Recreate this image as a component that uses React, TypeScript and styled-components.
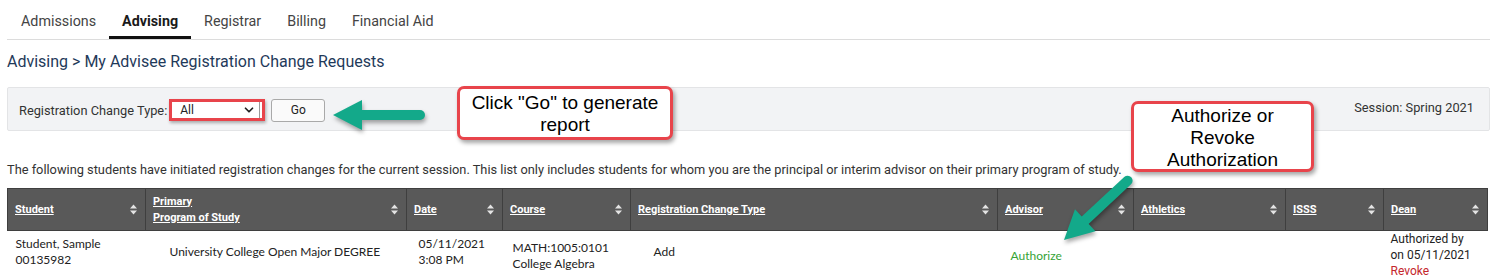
import React from 'react';
import styled, { createGlobalStyle } from 'styled-components';
import { ChevronDown } from 'lucide-react';

const GlobalStyle = createGlobalStyle`
	body {
		margin: 0;
		background: #fff;
		font-family: Roboto, "Liberation Sans", sans-serif;
		color: #333;
	}
`;

const Page = styled.div`
	position: relative;
	width: 1483px;
	padding-left: 7px;
	height: 279px;
	overflow: hidden;
`;

const TabBar = styled.nav`
	display: flex;
	height: 39px;
	padding-left: 1px;
	border-bottom: 1px solid #dcdcdc;
`;

const Tab = styled.a<{ $active?: boolean }>`
	display: flex;
	align-items: center;
	padding: 3px 13px 0;
	font-size: 14.3px;
	text-decoration: none;
	color: ${p => (p.$active ? '#1a1a1a' : '#444')};
	font-weight: ${p => (p.$active ? 700 : 400)};
	box-shadow: ${p => (p.$active ? 'inset 0 -3px 0 #111' : 'none')};
`;

const Title = styled.h1`
	margin: 12px 0 0;
	font-size: 16px;
	font-weight: 400;
	line-height: 20px;
	color: #1f3a5a;
`;

const FilterBar = styled.div`
	margin-top: 15px;
	display: flex;
	align-items: center;
	padding: 2px 15px 0 11px;
	box-sizing: border-box;
	height: 44px;
	background: #f2f3f5;
	border: 1px solid #e3e4e6;
	border-radius: 2px;
	font-size: 12.8px;
	color: #333;
`;

const Label = styled.label`
	margin-right: 2px;
`;

const SelectFrame = styled.div`
	position: relative;
	display: flex;
	width: 96px;
	height: 22px;
	box-sizing: border-box;
	border: 3px solid #e8444b;
	box-shadow: 1px 2px 3px rgba(0, 0, 0, 0.3);
	background: #fff;
`;

const Select = styled.select`
	appearance: none;
	width: 88px;
	height: 16px;
	border: 0;
	border-right: 1px solid #9a9a9a;
	padding: 0 0 0 8px;
	background: #fff;
	font-family: Roboto, "Liberation Sans", sans-serif;
	font-size: 12px;
	color: #222;
	outline: none;
`;

const Chevron = styled(ChevronDown)`
	position: absolute;
	right: 6px;
	top: 1px;
	pointer-events: none;
`;

const GoButton = styled.button`
	margin-left: 6px;
	width: 54px;
	height: 23px;
	border: 1px solid #a9a9a9;
	border-radius: 3px;
	background: #fafafa;
	font-family: Roboto, "Liberation Sans", sans-serif;
	font-size: 12px;
	color: #222;
`;

const Session = styled.span`
	margin-left: auto;
	align-self: flex-start;
	margin-top: 10px;
`;

const Intro = styled.p`
	margin: 31px 0 0;
	font-size: 12.8px;
	line-height: 16px;
	color: #333;
`;

const Table = styled.table`
	margin-top: 10px;
	width: 1480px;
	table-layout: fixed;
	border-collapse: collapse;
`;

const Th = styled.th`
	height: 41px;
	padding: 0 8px 0 7px;
	background: #595959;
	border: 1px solid #3f3f3f;
	text-align: left;
	vertical-align: middle;
`;

const HeadInner = styled.div`
	display: flex;
	align-items: center;
	justify-content: space-between;
`;

const HeadLink = styled.a`
	font-size: 11px;
	font-weight: 700;
	line-height: 16px;
	color: #fff;
	text-decoration: underline;
`;

const Td = styled.td<{ $top: number; $left: number; $roboto?: boolean }>`
	height: 49px;
	vertical-align: top;
	padding: ${p => p.$top}px 4px 0 ${p => p.$left}px;
	font-family: ${p => (p.$roboto ? 'Roboto, "Liberation Sans", sans-serif' : 'Lato, "Liberation Sans", sans-serif')};
	font-size: 12px;
	line-height: ${p => (p.$roboto ? 16 : 15.5)}px;
	color: #222;
`;

const Green = styled.span`
	color: #36a336;
`;

const Red = styled.span`
	color: #c4262c;
`;

const Callout = styled.div<{ $x: number; $y: number; $w: number; $h: number; $pad: number }>`
	position: absolute;
	left: ${p => p.$x}px;
	top: ${p => p.$y}px;
	width: ${p => p.$w}px;
	height: ${p => p.$h}px;
	box-sizing: border-box;
	padding: 2px ${p => p.$pad}px 0;
	display: flex;
	align-items: center;
	justify-content: center;
	text-align: center;
	border: 3px solid #e8444b;
	border-radius: 7px;
	background: #fff;
	box-shadow: 2px 3px 4px rgba(0, 0, 0, 0.35);
	font-family: "Liberation Sans", Arial, sans-serif;
	font-size: 19px;
	line-height: 22px;
	color: #000;
`;

const ArrowWrap = styled.div<{ $x: number; $y: number }>`
	position: absolute;
	left: ${p => p.$x - 4}px;
	top: ${p => p.$y - 20}px;
	width: 100px;
	height: 40px;
	filter: drop-shadow(1px 3px 2px rgba(0, 0, 0, 0.35));
`;

const ArrowSvg = styled.svg<{ $angle: number }>`
	display: block;
	overflow: visible;
	transform-origin: 4px 20px;
	transform: rotate(${p => p.$angle}deg);
`;

const Arrow = ({ x, y, angle = 0 }: { x: number; y: number; angle?: number }) => (
	<ArrowWrap $x={x} $y={y}>
		<ArrowSvg $angle={angle} width="100" height="40" viewBox="0 0 100 40">
			<line x1="30" y1="20" x2="91" y2="20" stroke="#13a98a" strokeWidth="10" strokeLinecap="round" />
			<polygon points="4,20 33,5 33,35" fill="#13a98a" />
		</ArrowSvg>
	</ArrowWrap>
);

const SortIcon = () => (
	<svg width="7" height="11" viewBox="0 0 7 11">
		<polygon points="0,4.5 3.5,0.5 7,4.5" fill="#e4e4e4" />
		<polygon points="0,6.5 3.5,10.5 7,6.5" fill="#e4e4e4" />
	</svg>
);

const columns = [
	{ label: ['Student'], width: 138 },
	{ label: ['Primary', 'Program of Study'], width: 261 },
	{ label: ['Date'], width: 96 },
	{ label: ['Course'], width: 128 },
	{ label: ['Registration Change Type'], width: 367 },
	{ label: ['Advisor'], width: 136 },
	{ label: ['Athletics'], width: 152 },
	{ label: ['ISSS'], width: 98 },
	{ label: ['Dean'], width: 104 },
];

const tabs = ['Admissions', 'Advising', 'Registrar', 'Billing', 'Financial Aid'];

const App = () => {
	return (
		<Page>
			<GlobalStyle />
			<TabBar>
				{tabs.map(t => (
					<Tab key={t} $active={t === 'Advising'}>{t}</Tab>
				))}
			</TabBar>
			<Title>Advising &gt; My Advisee Registration Change Requests</Title>
			<FilterBar>
				<Label>Registration Change Type:</Label>
				<SelectFrame>
					<Select defaultValue="All">
						<option>All</option>
						<option>Add</option>
						<option>Drop</option>
					</Select>
					<Chevron size={14} strokeWidth={3} color="#222" />
				</SelectFrame>
				<GoButton>Go</GoButton>
				<Session>Session: Spring 2021</Session>
			</FilterBar>
			<Intro>
				The following students have initiated registration changes for the current session. This list only includes students for whom you are the principal or interim advisor on their primary program of study.
			</Intro>
			<Table>
				<colgroup>
					{columns.map((c, i) => (
						<col key={i} style={{ width: c.width }} />
					))}
				</colgroup>
				<thead>
					<tr>
						{columns.map((c, i) => (
							<Th key={i}>
								<HeadInner>
									<HeadLink>
										{c.label.map((l, j) => (
											<React.Fragment key={j}>
												{j > 0 && <br />}
												{l}
											</React.Fragment>
										))}
									</HeadLink>
									<SortIcon />
								</HeadInner>
							</Th>
						))}
					</tr>
				</thead>
				<tbody>
					<tr>
						<Td $top={5} $left={8}>Student, Sample<br />00135982</Td>
						<Td $top={13} $left={24}>University College Open Major DEGREE</Td>
						<Td $top={5} $left={12}>05/11/2021<br />3:08 PM</Td>
						<Td $top={9} $left={10}>MATH:1005:0101<br />College Algebra</Td>
						<Td $top={13} $left={23}>Add</Td>
						<Td $top={17} $left={13}><Green>Authorize</Green></Td>
						<Td $top={0} $left={0} />
						<Td $top={0} $left={0} />
						<Td $top={0} $left={7} $roboto>
							Authorized by<br />on 05/11/2021<br /><Red>Revoke</Red>
						</Td>
					</tr>
				</tbody>
			</Table>
			<Callout $x={457} $y={86} $w={216} $h={54} $pad={3}>Click "Go" to generate report</Callout>
			<Callout $x={1131} $y={101} $w={183} $h={71} $pad={12}>Authorize or Revoke Authorization</Callout>
			<Arrow x={333} y={115} />
			<Arrow x={1064} y={240} angle={-43} />
		</Page>
	);
};

export default App;
